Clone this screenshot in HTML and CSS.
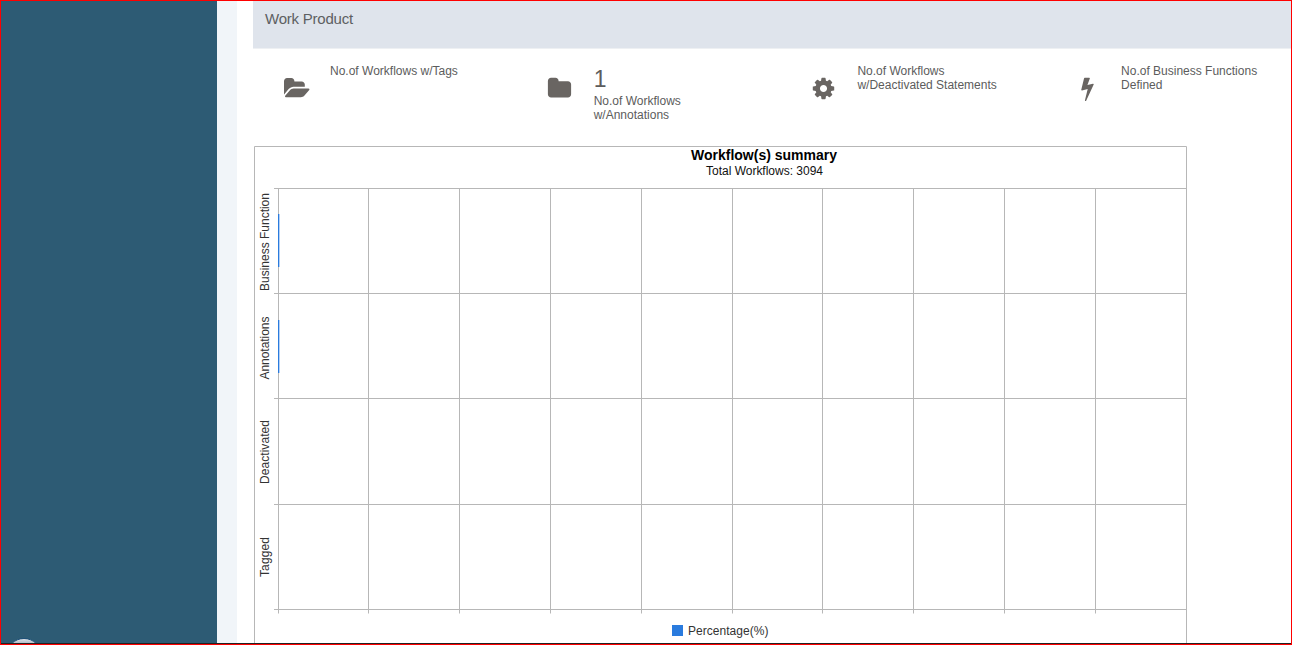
FILE: index.html
```
<!DOCTYPE html>
<html lang="en">
<head>
<meta charset="utf-8">
<title>Work Product</title>
<link rel="stylesheet" href="styles.css">
</head>
<body>
<div class="page">
  <aside class="sidebar"><span class="status-orb"></span></aside>
  <div class="gutter"></div>
  <main class="content">
    <h1 class="panel-title">Work Product</h1>
    <section class="stats">
      <div class="stat">
        <svg class="icon icon-wide" viewBox="0 0 1920 1792"><path d="M1879 952q0 31-31 66l-336 396q-43 51-120.5 86.5t-143.5 35.5h-1088q-34 0-60.5-13t-26.5-43q0-31 31-66l336-396q43-51 120.5-86.5t143.5-35.5h1088q34 0 60.5 13t26.5 43zm-343-344v160h-832q-94 0-197 47.5t-164 119.5l-337 396-5 6q0-4-.5-12.5t-.5-12.5v-960q0-92 66-158t158-66h320q92 0 158 66t66 158v32h544q92 0 158 66t66 158z"/></svg>
        <div class="stat-text"><div class="label">No.of Workflows w/Tags</div></div>
      </div>
      <div class="stat">
        <svg class="icon icon-folder" viewBox="0 0 1792 1792"><path d="M1728 608v704q0 92-66 158t-158 66h-1216q-92 0-158-66t-66-158v-960q0-92 66-158t158-66h320q92 0 158 66t66 158v32h672q92 0 158 66t66 158z"/></svg>
        <div class="stat-text"><div class="count">1</div><div class="label">No.of Workflows<br>w/Annotations</div></div>
      </div>
      <div class="stat">
        <svg class="icon" viewBox="0 0 1792 1792"><path d="M1152 896q0-106-75-181t-181-75-181 75-75 181 75 181 181 75 181-75 75-181zm512-109v222q0 12-8 23t-20 13l-185 28q-19 54-39 91 35 50 107 138 10 12 10 25t-9 23q-27 37-99 108t-94 71q-12 0-26-9l-138-108q-44 23-91 38-16 136-29 186-7 28-36 28h-222q-14 0-24.5-8.5t-11.5-21.5l-28-184q-49-16-90-37l-141 107q-10 9-25 9-14 0-25-11-126-114-165-168-7-10-7-23 0-12 8-23 15-21 51-66.5t54-70.5q-27-50-41-99l-183-27q-13-2-21-12.5t-8-23.5v-222q0-12 8-23t19-13l186-28q14-46 39-92-40-57-107-138-10-12-10-24 0-10 9-23 26-36 98.5-107.5t94.5-71.5q13 0 26 10l138 107q44-23 91-38 16-136 29-186 7-28 36-28h222q14 0 24.5 8.5t11.5 21.5l28 184q49 16 90 37l142-107q9-9 24-9 13 0 25 10 129 119 165 170 7 8 7 22 0 12-8 23-15 21-51 66.5t-54 70.5q26 50 41 98l183 28q13 2 21 12.5t8 23.5z"/></svg>
        <div class="stat-text"><div class="label">No.of Workflows<br>w/Deactivated Statements</div></div>
      </div>
      <div class="stat">
        <svg class="icon" viewBox="0 0 1792 1792"><path d="M1333 566q18 20 7 44l-540 1157q-13 25-42 25-4 0-14-2-17-5-25.5-19t-4.5-30l197-808-406 101q-4 1-12 1-18 0-31-11-18-15-13-39l201-825q4-14 16-23t28-9h328q19 0 32 12.5t13 29.5q0 8-5 18l-171 463 396-98q8-2 12-2 19 0 34 15z"/></svg>
        <div class="stat-text"><div class="label">No.of Business Functions<br>Defined</div></div>
      </div>
    </section>
    <svg class="chart" viewBox="0 0 933 497">
      <path class="grid" d="M.5 497V.5H932.5V497M20 42.5H933M20 147.5H933M20 252.5H933M20 358.5H933M20 463.5H933M24.500 42V467.500M114.500 42V467.500M205.500 42V467.500M296.500 42V467.500M387.500 42V467.500M478.500 42V467.500M568.500 42V467.500M659.500 42V467.500M750.500 42V467.500M841.500 42V467.500"/>
      <path class="bar-edge" d="M25 68h1v53h-1zM25 174h1v53h-1z"/>
      <path class="bar" d="M24 68h1v53h-1zM24 174h1v53h-1z"/>
      <text class="chart-title" x="437" y="14" textLength="146">Workflow(s) summary</text>
      <text class="chart-text dark" x="452" y="29" textLength="117">Total Workflows: 3094</text>
      <text class="chart-text" transform="translate(15 145) rotate(-90)" textLength="98">Business Function</text>
      <text class="chart-text" transform="translate(15 233.500) rotate(-90)" textLength="63">Annotations</text>
      <text class="chart-text" transform="translate(15 338) rotate(-90)" textLength="64">Deactivated</text>
      <text class="chart-text" transform="translate(15 431) rotate(-90)" textLength="40">Tagged</text>
      <rect class="bar" x="418" y="479" width="11" height="11"/>
      <text class="chart-text" x="434" y="489" textLength="80.5">Percentage(%)</text>
    </svg>
  </main>
</div>
</body>
</html>
```
FILE: styles.css
```
* {
  box-sizing: border-box;
}

body {
  margin: 0;
  font-family: "Liberation Sans", Arial, sans-serif;
}

.page {
  display: flex;
  width: 1292px;
  height: 645px;
  overflow: hidden;
  border: 1px solid #f00;
  background: linear-gradient(#222, #222) bottom / 100% 1px no-repeat #fff;
  padding-bottom: 1px;
}

.sidebar {
  position: relative;
  flex: none;
  width: 216px;
  overflow: hidden;
  background: #2d5b74;
}

.status-orb {
  position: absolute;
  left: 5px;
  top: 637px;
  width: 36px;
  height: 36px;
  border: 1px solid #1d5078;
  border-radius: 50%;
  background: linear-gradient(#dfe4ea, #aab5c2 5px);
}

.gutter {
  flex: none;
  width: 20px;
  background: #f1f5f9;
}

.content {
  flex: 1;
  height: 642px;
  overflow: hidden;
  padding-left: 16px;
}

.panel-title {
  height: 48px;
  margin: 0;
  padding: 9px 12px;
  border-bottom: 1px solid #eef0f3;
  background: #dfe4ec;
  color: #5d5f62;
  font-size: 15px;
  font-weight: 400;
  letter-spacing: -0.22px;
  line-height: 18px;
}

.stats {
  display: grid;
  grid-template-columns: repeat(4, 263.700px);
  height: 97px;
  padding: 15px 0 0 31px;
  color: #5c5c5c;
}

.stat {
  display: flex;
}

.icon {
  flex: none;
  width: 25px;
  height: 25px;
  margin: 12px 21px 0 0;
  fill: #696562;
}

.icon-wide {
  width: 26px;
  margin-right: 20px;
}

.icon-folder {
  margin-left: -1px;
  margin-right: 22px;
}

.stat-text {
  white-space: nowrap;
}

.count {
  height: 30px;
  font-size: 23px;
  line-height: 30px;
}

.label {
  font-size: 12px;
  line-height: 14px;
}

.chart {
  display: block;
  width: 933px;
  height: 497px;
  margin-left: 1px;
}

.grid {
  fill: none;
  stroke: #b7b7b7;
}

.bar {
  fill: #2a7bde;
}

.bar-edge {
  fill: #b5d0f4;
}

.chart-title {
  font-size: 14px;
  font-weight: 700;
  fill: #000;
}

.chart-text {
  font-size: 12px;
  fill: #333;
}

.dark {
  fill: #111;
}
```
